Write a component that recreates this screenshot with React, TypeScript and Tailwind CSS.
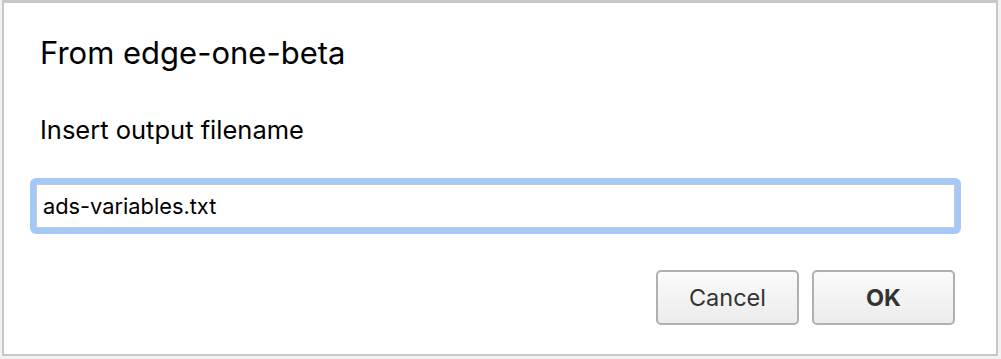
import React from "react";

export default function App() {
  return (
    <div className="w-[1001px] h-[359px] bg-[#f2f2f2] overflow-hidden" style={{ fontFamily: 'Inter, "Liberation Sans", Arial, sans-serif' }}>
      <div className="ml-[2px] w-[996px] h-[356px] bg-white border-x-2 border-b-2 border-t-[3px] border-[#c8c8c8] flex flex-col">
        <div className="pl-[36px] pt-[33px] text-[31px] leading-[34px] text-black">From edge-one-beta</div>
        <div className="pl-[36px] pt-[46px] text-[25.5px] leading-[28px] text-black">Insert output filename</div>
        <div className="ml-[26px] mt-[34px] w-[931px] h-[56px] rounded-[6px] bg-[#a4c9f8] p-[6px]">
          <div className="w-full h-full bg-white border border-[#c9c9c9] flex items-center pl-[6px] text-[21.8px] text-black">
            ads-variables.txt
          </div>
        </div>
        <div className="flex justify-end gap-[13px] mt-[36px] pr-[41px]">
          <button className="w-[143px] h-[55px] rounded-[5px] border-2 border-[#b0b0b0] bg-gradient-to-b from-[#fbfbfb] to-[#ececec] text-[23.5px] text-[#333]">
            Cancel
          </button>
          <button className="w-[143px] h-[55px] rounded-[5px] border-2 border-[#b0b0b0] bg-gradient-to-b from-[#fbfbfb] to-[#ececec] text-[23.5px] font-bold text-[#333]">
            OK
          </button>
        </div>
      </div>
    </div>
  );
}
